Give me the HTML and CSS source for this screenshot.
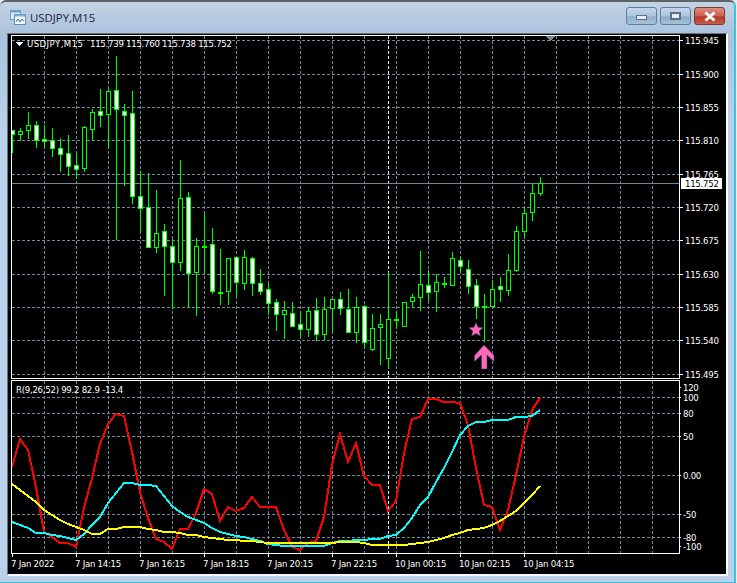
FILE: index.html
```html
<!DOCTYPE html>
<html lang="en">
<head>
    <meta charset="UTF-8">
    <title>USDJPY,M15</title>
    <link rel="stylesheet" href="styles.css">
</head>
<body>
    <div class="window">
        <div class="titlebar">
            <svg class="app-icon" width="16" height="15" viewBox="0 0 16 15">
                <rect x="0.5" y="0.5" width="10" height="9" fill="#dcecfa" stroke="#6f9ccb"/>
                <rect x="0.5" y="0.5" width="10" height="2" fill="#6f9ccb"/>
                <rect x="4.5" y="4.5" width="11" height="10" fill="#f2f8fe" stroke="#5b8cc0"/>
                <rect x="4.5" y="4.5" width="11" height="2" fill="#7fa9d4"/>
                <path d="M6 12 L8 9 L10 12 L12 9 L14 11" fill="none" stroke="#3b6ea5"/>
            </svg>
            <span class="title">USDJPY,M15</span>
            <div class="buttons">
                <div class="btn"><span class="min-icon"></span></div>
                <div class="btn"><span class="max-icon"></span></div>
                <div class="btn btn-close">
                    <svg width="14" height="11" viewBox="0 0 14 11">
                        <path d="M2.5 1.5 L11.5 9.5 M11.5 1.5 L2.5 9.5" fill="none" stroke="#fff" stroke-width="3"/>
                    </svg>
                </div>
            </div>
        </div>
        <div class="client">
            <svg id="chart" class="chart" viewBox="8 33 718 542"></svg>
        </div>
    </div>
    <script src="chart.js"></script>
</body>
</html>
```

FILE: styles.css
```css
* {
    margin: 0;
    padding: 0;
    box-sizing: border-box;
}
body {
    background-color: #e8eef4;
    overflow: hidden;
}

/* window frame */
.window {
    width: 736px;
    height: 583px;
    display: flex;
    flex-direction: column;
    padding: 0 6px 6px 7px;
    background: linear-gradient(180deg, #c3d3e3 0, #a9c3dd 32px, #b9d1ea 130px);
    border-top: 2px solid #5f6468;
    border-right: 2px solid #3fc3da;
    border-bottom: 1px solid #3fc3da;
    border-radius: 6px 6px 0 0;
}
.titlebar {
    height: 31px;
    flex: none;
    display: flex;
    align-items: center;
    padding: 0 3px 0 3px;
}
.app-icon {
    margin-right: 4px;
}
.title {
    font: 11.4px "Open Sans", sans-serif;
    color: #1c1c40;
}
.buttons {
    margin-left: auto;
    margin-top: -3px;
    display: flex;
    gap: 3px;
}
.btn {
    width: 31px;
    height: 18px;
    display: flex;
    align-items: center;
    justify-content: center;
    border: 1px solid #5e7d9c;
    border-radius: 3px;
    background: linear-gradient(180deg, #c4d6e8 0, #adc5de 50%, #8eacca 55%, #a7c1da 100%);
}
.btn-close {
    border-color: #7d3a33;
    background: linear-gradient(180deg, #dc8f84 0, #c9604f 50%, #b23a28 55%, #c95c48 100%);
}
.min-icon {
    width: 11px;
    height: 5px;
    margin-top: 3px;
    background-color: #e4ebf2;
    border: 1px solid #5d6f82;
}
.max-icon {
    width: 11px;
    height: 8px;
    background-color: #e4ebf2;
    border: 2px solid #5d6f82;
}
.client {
    flex: 1;
    background-color: #000;
    border-top: 1px solid #6b7278;
    border-right: 2px solid #fff;
    border-bottom: 2px solid #f4f8fc;
    border-left: 1px solid #6b7278;
    overflow: hidden;
}

/* chart */
.chart {
    display: block;
    width: 718px;
    height: 542px;
    margin-top: -1px;
    font: 9.5px "DejaVu Sans Condensed", "DejaVu Sans", sans-serif;
    letter-spacing: -0.25px;
    shape-rendering: crispEdges;
}
.chart text {
    fill: #fff;
    shape-rendering: auto;
}
.chart text.price-now {
    fill: #000;
}
.chart text.symbol {
    letter-spacing: 0.45px;
}
.frame {
    fill: none;
    stroke: #fff;
}
.grid {
    stroke: #778899;
    stroke-dasharray: 3 2;
}
.sep {
    stroke: #fff;
    stroke-dasharray: 3 2;
}
.price-line {
    stroke: #778899;
}
.price-box {
    fill: #fff;
}
.tick {
    stroke: #fff;
}
.wick {
    stroke: #00ff00;
}
.body {
    stroke: #00ff00;
    fill: #000;
}
.body.down {
    fill: #fff;
}
.doji {
    stroke: #00ff00;
    stroke-width: 2;
}
.ind {
    fill: none;
    stroke-width: 2;
}
.ind-red {
    stroke: #ff0000;
}
.ind-cyan {
    stroke: #00ffff;
}
.ind-yellow {
    stroke: #ffff00;
}
.marker {
    fill: #ff69b4;
    stroke: #3a3f9c;
    stroke-width: 0.5;
    shape-rendering: auto;
}
.tri {
    fill: #fff;
}
.shift {
    fill: #778899;
}
```

FILE: chart.js
```js
const svg = document.getElementById('chart');

function add(tag, attrs, text, parent) {
    const el = document.createElementNS('http://www.w3.org/2000/svg', tag);
    for (const k in attrs) el.setAttribute(k, attrs[k]);
    if (text) el.textContent = text;
    (parent || svg).appendChild(el);
    return el;
}

// frames
const LEFT = 11, RIGHT = 679;
const MAIN_TOP = 35, MAIN_BOT = 378, SUB_TOP = 380, SUB_BOT = 553;

// price axis: label, y
const prices = [
    ['115.945', 40], ['115.900', 74], ['115.855', 107], ['115.810', 140],
    ['115.765', 174], ['115.720', 207], ['115.675', 240], ['115.630', 274],
    ['115.585', 307], ['115.540', 340], ['115.495', 374]
];
const levels = [
    ['120', 387, 683, false], ['100', 397, 683, true], ['80', 413, 683, true],
    ['50', 436, 683, true], ['0.00', 475, 683, true], ['-50', 514, 683, true],
    ['-80', 537, 683, true], ['-100', 546, 683, false]
];

// grid
for (let x = 44; x < RIGHT; x += 32) {
    add('line', { class: 'grid', x1: x + .5, x2: x + .5, y1: MAIN_TOP + 1, y2: MAIN_BOT });
    add('line', { class: 'grid', x1: x + .5, x2: x + .5, y1: SUB_TOP + 1, y2: SUB_BOT });
}
prices.forEach(p => {
    add('line', { class: 'grid', x1: LEFT + 1, x2: RIGHT, y1: p[1] + .5, y2: p[1] + .5 });
});
levels.forEach(l => {
    if (l[3]) add('line', { class: 'grid', x1: LEFT + 1, x2: RIGHT, y1: l[1] + .5, y2: l[1] + .5 });
});

// 10 Jan separator
add('line', { class: 'sep', x1: 388.5, x2: 388.5, y1: MAIN_TOP + 1, y2: MAIN_BOT });
add('line', { class: 'sep', x1: 388.5, x2: 388.5, y1: SUB_TOP + 1, y2: SUB_BOT });

// current price line
add('line', { class: 'price-line', x1: LEFT + 1, x2: RIGHT, y1: 183.5, y2: 183.5 });

// clip for bars at the left edge
const defs = add('defs', {});
const clip = add('clipPath', { id: 'plot' }, null, defs);
add('rect', { x: LEFT + 1, y: MAIN_TOP + 1, width: RIGHT - LEFT - 1, height: MAIN_BOT - MAIN_TOP - 1 }, null, clip);
const bars = add('g', { 'clip-path': 'url(#plot)' });

// wick top, wick bottom, body top, body bottom, filled
const candles = [
    [130, 152, 130, 134, 1], [128, 140, 131, 134, 0], [112, 138, 125, 130, 0], [121, 147, 125, 140, 1],
    [125, 146, 139, 141, 1], [128, 156, 140, 148, 1], [138, 171, 148, 154, 1], [135, 175, 153, 166, 1],
    [153, 178, 165, 169, 1], [126, 171, 127, 168, 0], [109, 139, 112, 129, 0], [89, 126, 111, 115, 1],
    [89, 147, 91, 114, 0], [56, 239, 90, 109, 1], [104, 185, 111, 115, 1], [91, 203, 113, 196, 1],
    [171, 231, 196, 208, 1], [173, 247, 207, 247, 1], [190, 252, 233, 247, 0], [224, 295, 231, 246, 1],
    [239, 308, 246, 262, 1], [160, 270, 198, 262, 0], [192, 307, 197, 273, 1], [238, 315, 246, 272, 0],
    [214, 273, 246, 246, 1], [228, 293, 244, 291, 1], [249, 304, 292, 292, 1], [258, 304, 258, 291, 0],
    [257, 296, 257, 282, 1], [250, 289, 257, 283, 0], [257, 295, 258, 283, 1], [269, 294, 283, 291, 1],
    [283, 314, 289, 303, 1], [299, 330, 302, 314, 1], [301, 338, 310, 314, 0], [302, 326, 313, 326, 1],
    [311, 337, 324, 329, 1], [307, 336, 311, 329, 0], [298, 340, 310, 334, 1], [297, 339, 309, 334, 0],
    [299, 331, 299, 308, 0], [292, 314, 299, 308, 1], [289, 332, 309, 332, 1], [297, 342, 307, 332, 0],
    [305, 348, 306, 342, 1], [314, 350, 328, 349, 0], [314, 364, 324, 327, 0], [272, 368, 319, 358, 0],
    [311, 327, 319, 319, 1], [302, 326, 302, 326, 0], [294, 307, 297, 301, 0], [251, 310, 284, 297, 0],
    [270, 300, 285, 292, 1], [274, 311, 282, 291, 0], [277, 287, 283, 283, 1], [252, 285, 258, 285, 0],
    [257, 271, 260, 266, 1], [260, 293, 269, 286, 1], [279, 318, 285, 306, 1], [294, 341, 306, 306, 1],
    [280, 306, 289, 306, 0], [277, 301, 286, 289, 1], [254, 295, 270, 290, 0], [226, 271, 231, 270, 0],
    [207, 236, 213, 231, 0], [183, 220, 193, 212, 0], [177, 195, 183, 193, 0]
];
candles.forEach((c, i) => {
    const x = 12 + i * 8;
    add('line', { class: 'wick', x1: x + .5, x2: x + .5, y1: c[0], y2: c[1] + 1 }, null, bars);
    if (c[2] === c[3]) {
        add('line', { class: 'doji', x1: x - 2, x2: x + 3, y1: c[2] + 1, y2: c[2] + 1 }, null, bars);
    } else {
        add('rect', {
            class: c[4] ? 'body down' : 'body',
            x: x - 1.5, y: c[2] + .5, width: 4, height: c[3] - c[2]
        }, null, bars);
    }
});

// indicator lines, one y per bar
const red = [
    467, 439, 450, 487, 532, 537, 543, 543, 547, 508, 478, 444, 424, 414, 416, 452, 492, 518, 539, 542, 549, 529,
    529, 513, 489, 494, 521, 507, 511, 508, 497, 507, 507, 507, 530, 547, 550, 543, 541, 517, 465, 434, 462, 443,
    476, 485, 485, 511, 501, 453, 419, 417, 399, 399, 402, 402, 403, 425, 468, 505, 507, 530, 510, 475, 437, 410, 398
];
const cyan = [
    522, 525, 528, 533, 533, 535, 536, 538, 540, 534, 525, 517, 503, 493, 483, 483, 485, 485, 486, 496, 506, 512,
    517, 520, 523, 528, 532, 534, 536, 537, 539, 541, 544, 545, 546, 546, 546, 546, 546, 546, 543, 541, 541, 540,
    540, 539, 539, 536, 535, 528, 518, 505, 497, 482, 468, 452, 435, 426, 422, 422, 420, 420, 420, 417, 417, 416, 410
];
const yellow = [
    484, 490, 496, 502, 510, 515, 520, 524, 527, 530, 534, 534, 529, 529, 527, 527, 527, 529, 530, 532, 532, 533,
    535, 535, 537, 538, 539, 540, 540, 541, 541, 542, 543, 543, 543, 543, 543, 543, 543, 543, 543, 542, 542, 542,
    543, 545, 545, 545, 545, 545, 544, 543, 542, 540, 538, 535, 533, 530, 529, 528, 525, 521, 516, 511, 503, 495, 486
];
function polyline(values, cls) {
    const pts = values.map((y, i) => (12 + i * 8) + ',' + y).join(' ');
    add('polyline', { class: 'ind ' + cls, points: pts });
}
polyline(red, 'ind-red');
polyline(cyan, 'ind-cyan');
polyline(yellow, 'ind-yellow');

// frames on top
add('rect', { class: 'frame', x: LEFT + .5, y: MAIN_TOP + .5, width: RIGHT - LEFT, height: MAIN_BOT - MAIN_TOP });
add('rect', { class: 'frame', x: LEFT + .5, y: SUB_TOP + .5, width: RIGHT - LEFT, height: SUB_BOT - SUB_TOP });

// axis labels
prices.forEach(p => {
    add('line', { class: 'tick', x1: RIGHT + 1, x2: RIGHT + 4, y1: p[1] + .5, y2: p[1] + .5 });
    add('text', { x: 685, y: p[1] + 4 }, p[0]);
});
add('rect', { class: 'price-box', x: 681, y: 178, width: 41, height: 11 });
add('text', { class: 'price-now', x: 685, y: 187 }, '115.752');
levels.forEach(l => {
    add('line', { class: 'tick', x1: RIGHT + 1, x2: RIGHT + 2, y1: l[1] + .5, y2: l[1] + .5 });
    add('text', { x: l[2], y: l[1] + 4 }, l[0]);
});

// time axis
const times = [
    '7 Jan 2022', '7 Jan 14:15', '7 Jan 16:15', '7 Jan 18:15', '7 Jan 20:15',
    '7 Jan 22:15', '10 Jan 00:15', '10 Jan 02:15', '10 Jan 04:15'
];
times.forEach((t, i) => {
    const x = 12 + i * 64;
    add('line', { class: 'tick', x1: x + .5, x2: x + .5, y1: SUB_BOT, y2: SUB_BOT + 4 });
    add('text', { x: x - 1, y: 567 }, t);
});

// chart captions
add('polygon', { class: 'tri', points: '15,42 23,42 19,46' });
add('text', { class: 'symbol', x: 27, y: 47 }, 'USDJPY,M15');
add('text', { x: 90, y: 47 }, '115.739 115.760 115.738 115.752');
add('text', { x: 16, y: 393 }, 'R(9,26,52) 99.2 82.9 -13.4');
add('polygon', { class: 'shift', points: '546,36 555,36 550.5,41' });

// signal marks
add('polygon', {
    class: 'marker',
    points: '476,322.5 478,327.2 483.1,327.7 479.2,331 480.4,336.1 476,333.4 471.6,336.1 472.8,331 468.9,327.7 474,327.2'
});
add('polygon', {
    class: 'marker',
    points: '484,345 494,355.5 494,361.5 487,355 487,369 481.5,369 481.5,355 474.5,361.5 474.5,355.5'
});
```
